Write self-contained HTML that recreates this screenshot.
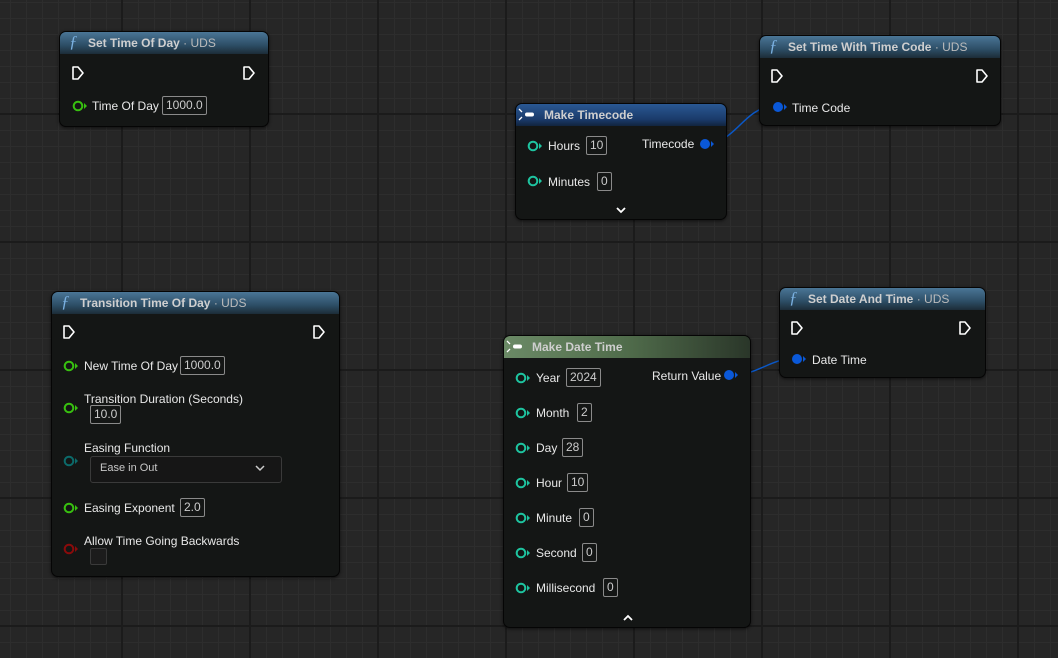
<!DOCTYPE html>
<html><head><meta charset="utf-8"><style>
*{margin:0;padding:0;box-sizing:border-box}
body{width:1058px;height:658px;overflow:hidden;position:relative;background:#262626;font-family:"Liberation Sans",sans-serif;font-size:12px;color:#e6e6e6;
background-image:
linear-gradient(to right,#1b1b1b 0,#1b1b1b 2px,transparent 2px),
linear-gradient(to bottom,#1b1b1b 0,#1b1b1b 2px,transparent 2px),
linear-gradient(to right,#2d2d2d 0,#2d2d2d 1px,transparent 1px),
linear-gradient(to bottom,#2d2d2d 0,#2d2d2d 1px,transparent 1px);
background-size:128px 128px,128px 128px,16px 16px,16px 16px;
background-position:121px 0,0 113px,10px 0,0 2px;}
.n{position:absolute;background:#141615;border:1px solid #050505;border-radius:7px;box-shadow:0 1px 3px rgba(0,0,0,.6);overflow:hidden}
.h{position:absolute;left:0;right:0;top:0;height:22px;font-weight:bold;color:#cfcfcf;font-size:12px;line-height:22px;padding-left:28px;white-space:nowrap}
.hf{background:linear-gradient(to bottom,#4a7596 0,#2d4e66 60%,#1c2c38 100%)}
.hb{background:linear-gradient(to bottom,#2a5893 0,#1a3a6a 70%,#11243e 100%)}
.hg{background:linear-gradient(to right,#6b8a66 0,#506c4b 50%,#2a3629 100%)}
.h .u{font-weight:normal;color:#bbb}
.f{position:absolute;left:9px;top:-1px;font-style:italic;font-family:"Liberation Serif",serif;color:#7ab0e0;font-size:17px;font-weight:normal}
.t{position:absolute;white-space:nowrap;color:#e8e8e8}
.b{position:absolute;border:1px solid #8a8a8a;border-radius:2px;height:19px;line-height:17px;padding:0 3px;color:#ccc;font-size:12px}
svg{position:absolute;overflow:visible}
</style></head><body>

<svg style="left:0;top:0" width="1058" height="658">
<path d="M708 143 C735 143 745 107 772 107" stroke="#0a58c8" stroke-width="1.5" fill="none"/>
<path d="M732 375 C758 375 770 359 792 359" stroke="#0a58c8" stroke-width="1.5" fill="none"/>
</svg>

<div class="n" style="left:59px;top:31px;width:210px;height:96px">
<div class="h hf"><span class="f">ƒ</span>Set Time Of Day <span class="u">· UDS</span></div>
<div class="t" style="left:32px;top:67px">Time Of Day</div>
<div class="b" style="left:102px;top:64px">1000.0</div>
</div>

<div class="n" style="left:759px;top:35px;width:242px;height:91px">
<div class="h hf"><span class="f">ƒ</span>Set Time With Time Code <span class="u">· UDS</span></div>
<div class="t" style="left:32px;top:65px">Time Code</div>
</div>

<div class="n" style="left:515px;top:103px;width:212px;height:117px">
<div class="h hb">Make Timecode</div>
<div class="t" style="left:32px;top:35px">Hours</div>
<div class="b" style="left:70px;top:32px">10</div>
<div class="t" style="left:126px;top:33px">Timecode</div>
<div class="t" style="left:32px;top:71px">Minutes</div>
<div class="b" style="left:81px;top:68px">0</div>
</div>

<div class="n" style="left:51px;top:291px;width:289px;height:286px">
<div class="h hf"><span class="f">ƒ</span>Transition Time Of Day <span class="u">· UDS</span></div>
<div class="t" style="left:32px;top:67px">New Time Of Day</div>
<div class="b" style="left:128px;top:64px">1000.0</div>
<div class="t" style="left:32px;top:100px">Transition Duration (Seconds)</div>
<div class="b" style="left:38px;top:113px">10.0</div>
<div class="t" style="left:32px;top:149px">Easing Function</div>
<div style="position:absolute;left:38px;top:164px;width:192px;height:27px;border:1px solid #3a3a3a;border-radius:3px;background:#161616"></div>
<div class="t" style="left:48px;top:170px;color:#c8c8c8;font-size:11px">Ease in Out</div>
<div class="t" style="left:32px;top:209px">Easing Exponent</div>
<div class="b" style="left:128px;top:206px">2.0</div>
<div class="t" style="left:32px;top:242px">Allow Time Going Backwards</div>
<div style="position:absolute;left:38px;top:256px;width:17px;height:17px;border:1px solid #3a3a3a;border-radius:2px;background:#1c1c1c"></div>
</div>

<div class="n" style="left:779px;top:287px;width:207px;height:91px">
<div class="h hf"><span class="f">ƒ</span>Set Date And Time <span class="u">· UDS</span></div>
<div class="t" style="left:32px;top:65px">Date Time</div>
</div>

<div class="n" style="left:503px;top:335px;width:248px;height:293px">
<div class="h hg">Make Date Time</div>
<div class="t" style="left:32px;top:35px">Year</div><div class="b" style="left:62px;top:32px">2024</div>
<div class="t" style="left:148px;top:33px">Return Value</div>
<div class="t" style="left:32px;top:70px">Month</div><div class="b" style="left:73px;top:67px">2</div>
<div class="t" style="left:32px;top:105px">Day</div><div class="b" style="left:58px;top:102px">28</div>
<div class="t" style="left:32px;top:140px">Hour</div><div class="b" style="left:63px;top:137px">10</div>
<div class="t" style="left:32px;top:175px">Minute</div><div class="b" style="left:75px;top:172px">0</div>
<div class="t" style="left:32px;top:210px">Second</div><div class="b" style="left:78px;top:207px">0</div>
<div class="t" style="left:32px;top:245px">Millisecond</div><div class="b" style="left:99px;top:242px">0</div>
</div>

<svg style="left:0;top:0" width="1058" height="658" fill="none">
<g stroke="#fff" stroke-width="1.6" stroke-linejoin="round">
<path d="M73 67h5l5 6l-5 6h-5z"/><path d="M244 67h5l5 6l-5 6h-5z"/>
<path d="M772 70h5l5 6l-5 6h-5z"/><path d="M977 70h5l5 6l-5 6h-5z"/>
<path d="M64 326h5l5 6l-5 6h-5z"/><path d="M314 326h5l5 6l-5 6h-5z"/>
<path d="M792 322h5l5 6l-5 6h-5z"/><path d="M960 322h5l5 6l-5 6h-5z"/>
</g>
<g stroke="#38c010" stroke-width="2">
<circle cx="78" cy="106" r="4.3"/><circle cx="69" cy="366" r="4.3"/><circle cx="69" cy="408" r="4.3"/><circle cx="69" cy="508" r="4.3"/>
</g>
<g fill="#38c010"><path d="M84 103l3 3l-3 3z"/><path d="M75 363l3 3l-3 3z"/><path d="M75 405l3 3l-3 3z"/><path d="M75 505l3 3l-3 3z"/></g>
<circle cx="69" cy="461" r="4.3" stroke="#0c6a6a" stroke-width="2"/><path d="M75 458l3 3l-3 3z" fill="#0c6a6a"/>
<circle cx="69" cy="549" r="4.3" stroke="#8a0b0b" stroke-width="2"/><path d="M75 546l3 3l-3 3z" fill="#8a0b0b"/>
<g stroke="#1ec4a0" stroke-width="2">
<circle cx="533" cy="146" r="4.3"/><circle cx="533" cy="181" r="4.3"/>
<circle cx="521" cy="378" r="4.3"/><circle cx="521" cy="413" r="4.3"/><circle cx="521" cy="448" r="4.3"/><circle cx="521" cy="483" r="4.3"/><circle cx="521" cy="518" r="4.3"/><circle cx="521" cy="553" r="4.3"/><circle cx="521" cy="588" r="4.3"/>
</g>
<g fill="#1ec4a0"><path d="M539 143l3 3l-3 3z"/><path d="M539 178l3 3l-3 3z"/>
<path d="M527 375l3 3l-3 3z"/><path d="M527 410l3 3l-3 3z"/><path d="M527 445l3 3l-3 3z"/><path d="M527 480l3 3l-3 3z"/><path d="M527 515l3 3l-3 3z"/><path d="M527 550l3 3l-3 3z"/><path d="M527 585l3 3l-3 3z"/></g>
<g fill="#0a58d8">
<circle cx="705" cy="144" r="5"/><path d="M711 141l3 3l-3 3z"/>
<circle cx="778" cy="107" r="5"/><path d="M784 104l3 3l-3 3z"/>
<circle cx="729" cy="375" r="5"/><path d="M735 372l3 3l-3 3z"/>
<circle cx="797" cy="359" r="5"/><path d="M803 356l3 3l-3 3z"/>
</g>
<g stroke="#fff" stroke-width="1.3"><path d="M519 109l3 3M519 120l3-3M507 341l3 3M507 352l3-3"/></g>
<rect x="525" y="112.5" width="9" height="4" rx="2" fill="#fff"/>
<rect x="513" y="344.5" width="9" height="4" rx="2" fill="#fff"/>
<g stroke="#fff" stroke-width="1.8"><path d="M617 208l4 4l4-4"/><path d="M624 620l4-4l4 4"/></g>
<path d="M256 466l4 4l4-4" stroke="#ccc" stroke-width="1.5"/>
</svg>
</body></html>
